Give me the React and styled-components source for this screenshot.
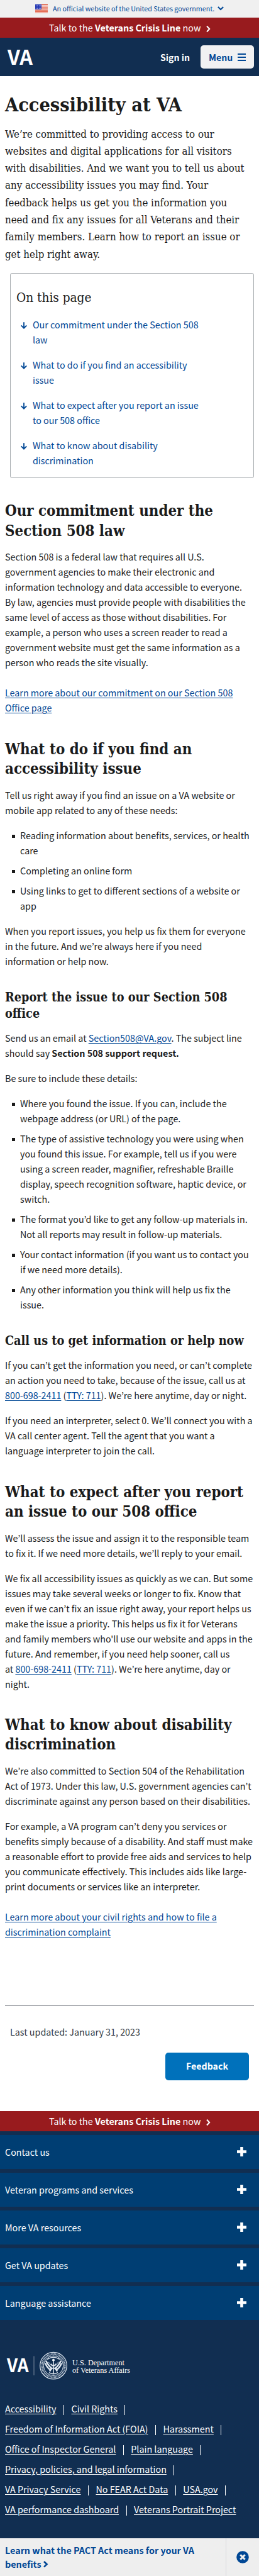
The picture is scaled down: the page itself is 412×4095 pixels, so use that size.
import React from "react";
import styled, { createGlobalStyle } from "styled-components";

const sans = `"Noto Sans CJK KR", "Open Sans", sans-serif`;
const slab = `"DejaVu Serif Condensed", "DejaVu Serif", serif`;
const navy = "#112e51";
const link = "#004795";
const ink = "#1b1b1b";

const Global = createGlobalStyle`
  *, *::before, *::after { box-sizing: border-box; }
  body { margin: 0; background: #fff; }
`;

const Page = styled.div`
  width: 412px;
  height: 4095px;
  display: flex;
  flex-direction: column;
  font-family: ${sans};
  font-size: 14.32px;
  line-height: 24px;
  color: ${ink};
  white-space: nowrap;
`;

const GovBanner = styled.div`
  height: 28px;
  flex: none;
  display: flex;
  align-items: center;
  padding: 0 0 1px 56px;
  background: #f0f0f0;
  color: ${link};
  font-size: 10.73px;
  line-height: 16px;
  svg:first-child { margin: 1px 8px 0 0; }
  svg:last-child { margin-left: 5px; }
`;

const Crisis = styled.div`
  height: 32px;
  flex: none;
  display: flex;
  align-items: center;
  padding-left: 78px;
  background: #981b1e;
  color: #fff;
  svg { margin: 3px 0 0 9px; }
`;

const Header = styled.header`
  height: 61px;
  flex: none;
  display: flex;
  align-items: center;
  padding: 0 8px;
  background: ${navy};
`;

const SignIn = styled.span`
  margin-left: auto;
  margin-right: 17px;
  color: #fff;
  font-weight: 700;
  font-size: 14.1px;
`;

const MenuButton = styled.button`
  width: 85px;
  height: 37px;
  display: flex;
  align-items: center;
  gap: 8px;
  padding: 0 0 0 13px;
  border: 0;
  border-radius: 5px;
  background: #f1f1f2;
  color: ${link};
  font: 700 14.1px/24px ${sans};
`;

const Main = styled.main`
  height: 3235px;
  flex: none;
  display: flex;
  flex-direction: column;
  padding: 0 8px;
`;

const H1 = styled.h1`
  margin: 24px 0 0;
  font: 700 30.36px/42px ${slab};
`;

const Intro = styled.p`
  margin: 12.5px 0 0;
  font: 400 16.72px/27.33px ${slab};
`;

const TocBox = styled.nav`
  width: 388px;
  height: 326px;
  flex: none;
  margin: 15.8px 0 0 8px;
  padding: 24px 9px 0;
  border: 1px solid #a9aeb1;
  border-radius: 3px;
`;

const TocTitle = styled.h2`
  margin: 0 0 17px;
  font: 400 20.6px/28px ${slab};
`;

const TocItem = styled.a`
  display: flex;
  gap: 9px;
  margin: 0 0 16px;
  padding-left: 7px;
  color: ${link};
  svg { margin-top: 8px; flex: none; }
`;

const H2 = styled.h2`
  margin: ${(p) => p.$top ?? 38}px 0 13.6px;
  font: 700 23.85px/31.2px ${slab};
`;

const H3 = styled.h3`
  margin: 32px 0 14px;
  font: 700 19.72px/26px ${slab};
`;

const P = styled.p`
  margin: 0 0 ${(p) => p.$after ?? 16}px;
`;

const A = styled.a`
  color: ${(p) => p.$color ?? link};
  text-decoration: underline;
  text-underline-offset: 2px;
  text-decoration-thickness: 1px;
`;

const List = styled.ul`
  margin: 0 0 ${(p) => p.$after ?? 16}px;
  padding: 0;
  display: flex;
  flex-direction: column;
  gap: 8px;
  list-style: none;
`;

const Item = styled.li`
  display: flex;
  padding-left: 11px;
  gap: 8px;
  &::before {
    content: "";
    flex: none;
    width: 5px;
    height: 5px;
    margin-top: 11px;
    background: ${ink};
  }
`;

const Rule = styled.hr`
  width: 100%;
  height: 2px;
  flex: none;
  margin: 104.3px 0 0;
  border: 0;
  background: #aeb0b5;
`;

const Updated = styled.p`
  margin: 28.8px 0 0 8px;
  color: #323a45;
`;

const Feedback = styled.button`
  align-self: flex-end;
  width: 133px;
  height: 44px;
  margin: 21.2px 8px 0 0;
  padding: 0 0 1px;
  border: 0;
  border-radius: 5px;
  background: #0071bb;
  color: #fff;
  font: 700 14.2px/24px ${sans};
`;

const Footer = styled.footer`
  flex: 1;
  display: flex;
  flex-direction: column;
  background: ${navy};
  color: #fff;
`;

const Panels = styled.div`
  display: flex;
  flex-direction: column;
  gap: 6px;
  padding-top: 6px;
`;

const Panel = styled.div`
  height: 54px;
  display: flex;
  align-items: center;
  justify-content: space-between;
  padding: 0 20px 1px 8px;
  background: #003e73;
`;

const Brand = styled.div`
  height: 46px;
  margin: 50px 0 0 8px;
`;

const Links = styled.div`
  display: flex;
  flex-direction: column;
  padding: 29px 8px 0;
`;

const LinkRow = styled.div`
  height: 32px;
  display: flex;
  align-items: center;
`;

const Bar = styled.i`
  width: 1px;
  height: 16px;
  margin: 4px 11.5px 0;
  background: #fff;
`;

const PactBar = styled.aside`
  flex: none;
  height: 60px;
  display: flex;
  background: #eee;
  color: ${link};
  font-weight: 700;
  line-height: 21.6px;
`;

const PactText = styled.div`
  width: 360px;
  padding: 8px 0 0 8px;
  border-right: 1px solid #d6d7d9;
`;

const PactClose = styled.div`
  flex: 1;
  display: flex;
  align-items: center;
  justify-content: center;
`;

const Flag = () => (
  <svg width="20" height="14" viewBox="0 0 20 14">
    <rect width="20" height="14" fill="#fff" />
    {[0, 2, 4, 6, 8, 10, 12].map((y) => (
      <rect key={y} y={y * 1.08} width="20" height="1.1" fill="#db3e1f" />
    ))}
    <rect width="10" height="8" fill="#1e33b1" />
    {[1.5, 4, 6.5].map((y) =>
      [1.3, 3.8, 6.3, 8.8].map((x) => <circle key={`${x}-${y}`} cx={x} cy={y} r=".5" fill="#cfd6f5" />)
    )}
  </svg>
);

const Chevron = () => (
  <svg width="7" height="12" viewBox="0 0 7 12" fill="none" stroke="#fff" strokeWidth="2">
    <path d="M1 1.5 5.2 6 1 10.5" />
  </svg>
);

const Arrow = () => (
  <svg width="10" height="11" viewBox="0 0 10 11" fill="none" stroke={link} strokeWidth="1.8">
    <path d="M5 .3V9.6M.7 5.4 5 9.7 9.3 5.4" />
  </svg>
);

const Plus = () => (
  <svg width="15" height="15" viewBox="0 0 15 15" fill="#fff">
    <path d="M5.2 0h4.6v5.2H15v4.6H9.8V15H5.2V9.8H0V5.2h5.2z" />
  </svg>
);

const Seal = () => (
  <g transform="translate(77 22.7)" fill="none" stroke="#e4ebf3">
    <circle r="21.3" strokeWidth="1.2" />
    <circle r="18.2" strokeWidth="3" strokeDasharray="1.3 .9" opacity=".75" />
    <circle r="15.7" strokeWidth="1" />
    <path d="M-12-8Q-8 0-3 4L-6 9M12-8Q8 0 3 4L6 9M-13-4Q-10 4-4 7M13-4Q10 4 4 7" strokeWidth="2.4" />
    <path d="M-4-3 0 1 4-3M0-7V2M-4 6 0 3 4 6M0 4V12M-7 11Q0 15 7 11M-10-10Q0-17 10-10" strokeWidth="1.5" />
    <circle cy="-9" r="1.6" fill="#fff" />
    <path d="M-8-6-2 1M8-6 2 1" strokeWidth="1" />
  </g>
);

const CrisisLine = () => (
  <Crisis>
    <span>
      Talk to the <b>Veterans Crisis Line</b> now
    </span>
    <Chevron />
  </Crisis>
);

const Phones = () => (
  <>
    <A>800-698-2411</A> (<A>TTY: 711</A>)
  </>
);

const toc = [
  ["Our commitment under the Section 508", "law"],
  ["What to do if you find an accessibility", "issue"],
  ["What to expect after you report an issue", "to our 508 office"],
  ["What to know about disability", "discrimination"],
];

const panels = [
  "Contact us",
  "Veteran programs and services",
  "More VA resources",
  "Get VA updates",
  "Language assistance",
];

const footerLinks = [
  ["Accessibility", "Civil Rights"],
  ["Freedom of Information Act (FOIA)", "Harassment"],
  ["Office of Inspector General", "Plain language"],
  ["Privacy, policies, and legal information"],
  ["VA Privacy Service", "No FEAR Act Data", "USA.gov"],
  ["VA performance dashboard", "Veterans Portrait Project"],
];

export default function App() {
  return (
    <Page>
      <Global />
      <GovBanner>
        <Flag />
        An official website of the United States government.
        <svg width="10" height="7" viewBox="0 0 10 7" fill="none" stroke={link} strokeWidth="2">
          <path d="M.8 1 5 5.2 9.2 1" />
        </svg>
      </GovBanner>
      <CrisisLine />
      <Header>
        <svg width="52" height="60" viewBox="0 0 52 60">
          <text x="4" y="41.5" textLength="40" lengthAdjust="spacingAndGlyphs" fill="#fff" fontFamily={sans} fontWeight="700" fontSize="32">
            VA
          </text>
        </svg>
        <SignIn>Sign in</SignIn>
        <MenuButton>
          Menu
          <svg width="13" height="12" viewBox="0 0 13 12" fill={link}>
            <path d="M0 0h13v2H0zM0 5h13v2H0zM0 10h13v2H0z" />
          </svg>
        </MenuButton>
      </Header>
      <Main>
        <H1>Accessibility at VA</H1>
        <Intro>
          We’re committed to providing access to our
          <br />
          websites and digital applications for all visitors
          <br />
          with disabilities. And we want you to tell us about
          <br />
          any accessibility issues you may find. Your
          <br />
          feedback helps us get you the information you
          <br />
          need and fix any issues for all Veterans and their
          <br />
          family members. Learn how to report an issue or
          <br />
          get help right away.
        </Intro>
        <TocBox>
          <TocTitle>On this page</TocTitle>
          {toc.map(([a, b]) => (
            <TocItem key={a}>
              <Arrow />
              <span>
                {a}
                <br />
                {b}
              </span>
            </TocItem>
          ))}
        </TocBox>
        <H2 $top={37.4}>
          Our commitment under the
          <br />
          Section 508 law
        </H2>
        <P $after={24}>
          Section 508 is a federal law that requires all U.S.
          <br />
          government agencies to make their electronic and
          <br />
          information technology and data accessible to everyone.
          <br />
          By law, agencies must provide people with disabilities the
          <br />
          same level of access as those without disabilities. For
          <br />
          example, a person who uses a screen reader to read a
          <br />
          government website must get the same information as a
          <br />
          person who reads the site visually.
        </P>
        <P $after={0}>
          <A>
            Learn more about our commitment on our Section 508
            <br />
            Office page
          </A>
        </P>
        <H2 $top={38.8}>
          What to do if you find an
          <br />
          accessibility issue
        </H2>
        <P>
          Tell us right away if you find an issue on a VA website or
          <br />
          mobile app related to any of these needs:
        </P>
        <List>
          <Item>
            <span>
              Reading information about benefits, services, or health
              <br />
              care
            </span>
          </Item>
          <Item>
            <span>Completing an online form</span>
          </Item>
          <Item>
            <span>
              Using links to get to different sections of a website or
              <br />
              app
            </span>
          </Item>
        </List>
        <P $after={0}>
          When you report issues, you help us fix them for everyone
          <br />
          in the future. And we’re always here if you need
          <br />
          information or help now.
        </P>
        <H3>
          Report the issue to our Section 508
          <br />
          office
        </H3>
        <P>
          Send us an email at <A>Section508@VA.gov</A>. The subject line
          <br />
          should say <b>Section 508 support request.</b>
        </P>
        <P>Be sure to include these details:</P>
        <List $after={0}>
          <Item>
            <span>
              Where you found the issue. If you can, include the
              <br />
              webpage address (or URL) of the page.
            </span>
          </Item>
          <Item>
            <span>
              The type of assistive technology you were using when
              <br />
              you found this issue. For example, tell us if you were
              <br />
              using a screen reader, magnifier, refreshable Braille
              <br />
              display, speech recognition software, haptic device, or
              <br />
              switch.
            </span>
          </Item>
          <Item>
            <span>
              The format you’d like to get any follow-up materials in.
              <br />
              Not all reports may result in follow-up materials.
            </span>
          </Item>
          <Item>
            <span>
              Your contact information (if you want us to contact you
              <br />
              if we need more details).
            </span>
          </Item>
          <Item>
            <span>
              Any other information you think will help us fix the
              <br />
              issue.
            </span>
          </Item>
        </List>
        <H3>Call us to get information or help now</H3>
        <P>
          If you can’t get the information you need, or can’t complete
          <br />
          an action you need to take, because of the issue, call us at
          <br />
          <Phones />. We’re here anytime, day or night.
        </P>
        <P $after={0}>
          If you need an interpreter, select 0. We’ll connect you with a
          <br />
          VA call center agent. Tell the agent that you want a
          <br />
          language interpreter to join the call.
        </P>
        <H2 $top={38.6}>
          What to expect after you report
          <br />
          an issue to our 508 office
        </H2>
        <P>
          We’ll assess the issue and assign it to the responsible team
          <br />
          to fix it. If we need more details, we’ll reply to your email.
        </P>
        <P $after={0}>
          We fix all accessibility issues as quickly as we can. But some
          <br />
          issues may take several weeks or longer to fix. Know that
          <br />
          even if we can’t fix an issue right away, your report helps us
          <br />
          make the issue a priority. This helps us fix it for Veterans
          <br />
          and family members who'll use our website and apps in the
          <br />
          future. And remember, if you need help sooner, call us
          <br />
          at <Phones />. We’re here anytime, day or
          <br />
          night.
        </P>
        <H2>
          What to know about disability
          <br />
          discrimination
        </H2>
        <P>
          We’re also committed to Section 504 of the Rehabilitation
          <br />
          Act of 1973. Under this law, U.S. government agencies can’t
          <br />
          discriminate against any person based on their disabilities.
        </P>
        <P $after={24}>
          For example, a VA program can’t deny you services or
          <br />
          benefits simply because of a disability. And staff must make
          <br />
          a reasonable effort to provide free aids and services to help
          <br />
          you communicate effectively. This includes aids like large-
          <br />
          print documents or services like an interpreter.
        </P>
        <P $after={0}>
          <A>
            Learn more about your civil rights and how to file a
            <br />
            discrimination complaint
          </A>
        </P>
        <Rule />
        <Updated>Last updated: January 31, 2023</Updated>
        <Feedback>Feedback</Feedback>
      </Main>
      <CrisisLine />
      <Footer>
        <Panels>
          {panels.map((t) => (
            <Panel key={t}>
              {t}
              <Plus />
            </Panel>
          ))}
        </Panels>
        <Brand>
          <svg width="204" height="46" viewBox="0 0 204 46">
            <g fill="#fff">
              <text x="3" y="33" textLength="34.5" lengthAdjust="spacingAndGlyphs" fontFamily={sans} fontWeight="700" fontSize="29.5">
                VA
              </text>
              <rect x="45.5" y="7.5" width="1" height="30.5" opacity=".45" />
              <g fontFamily="'Liberation Serif', serif" fontSize="12.5">
                <text x="107" y="21.5" textLength="83" lengthAdjust="spacingAndGlyphs">U.S. Department</text>
                <text x="107" y="33.5" textLength="92" lengthAdjust="spacingAndGlyphs">of Veterans Affairs</text>
              </g>
            </g>
            <Seal />
          </svg>
        </Brand>
        <Links>
          {footerLinks.map((row, i) => (
            <LinkRow key={row[0]}>
              {row.map((t, j) => (
                <React.Fragment key={t}>
                  <A $color="#fff">{t}</A>
                  {(i < footerLinks.length - 1 || j < row.length - 1) && <Bar />}
                </React.Fragment>
              ))}
            </LinkRow>
          ))}
        </Links>
      </Footer>
      <PactBar>
        <PactText>
          Learn what the PACT Act means for your VA
          <br />
          benefits{" "}
          <svg width="8" height="11" viewBox="0 0 8 11" fill="none" stroke={link} strokeWidth="2.6">
            <path d="M1 1 5.5 5.3 1 9.6" />
          </svg>
        </PactText>
        <PactClose>
          <svg width="20" height="20" viewBox="0 0 20 20">
            <circle cx="10" cy="10" r="9.8" fill={link} />
            <path d="M6.3 6.3 13.7 13.7M13.7 6.3 6.3 13.7" stroke="#eee" strokeWidth="3" />
          </svg>
        </PactClose>
      </PactBar>
    </Page>
  );
}
